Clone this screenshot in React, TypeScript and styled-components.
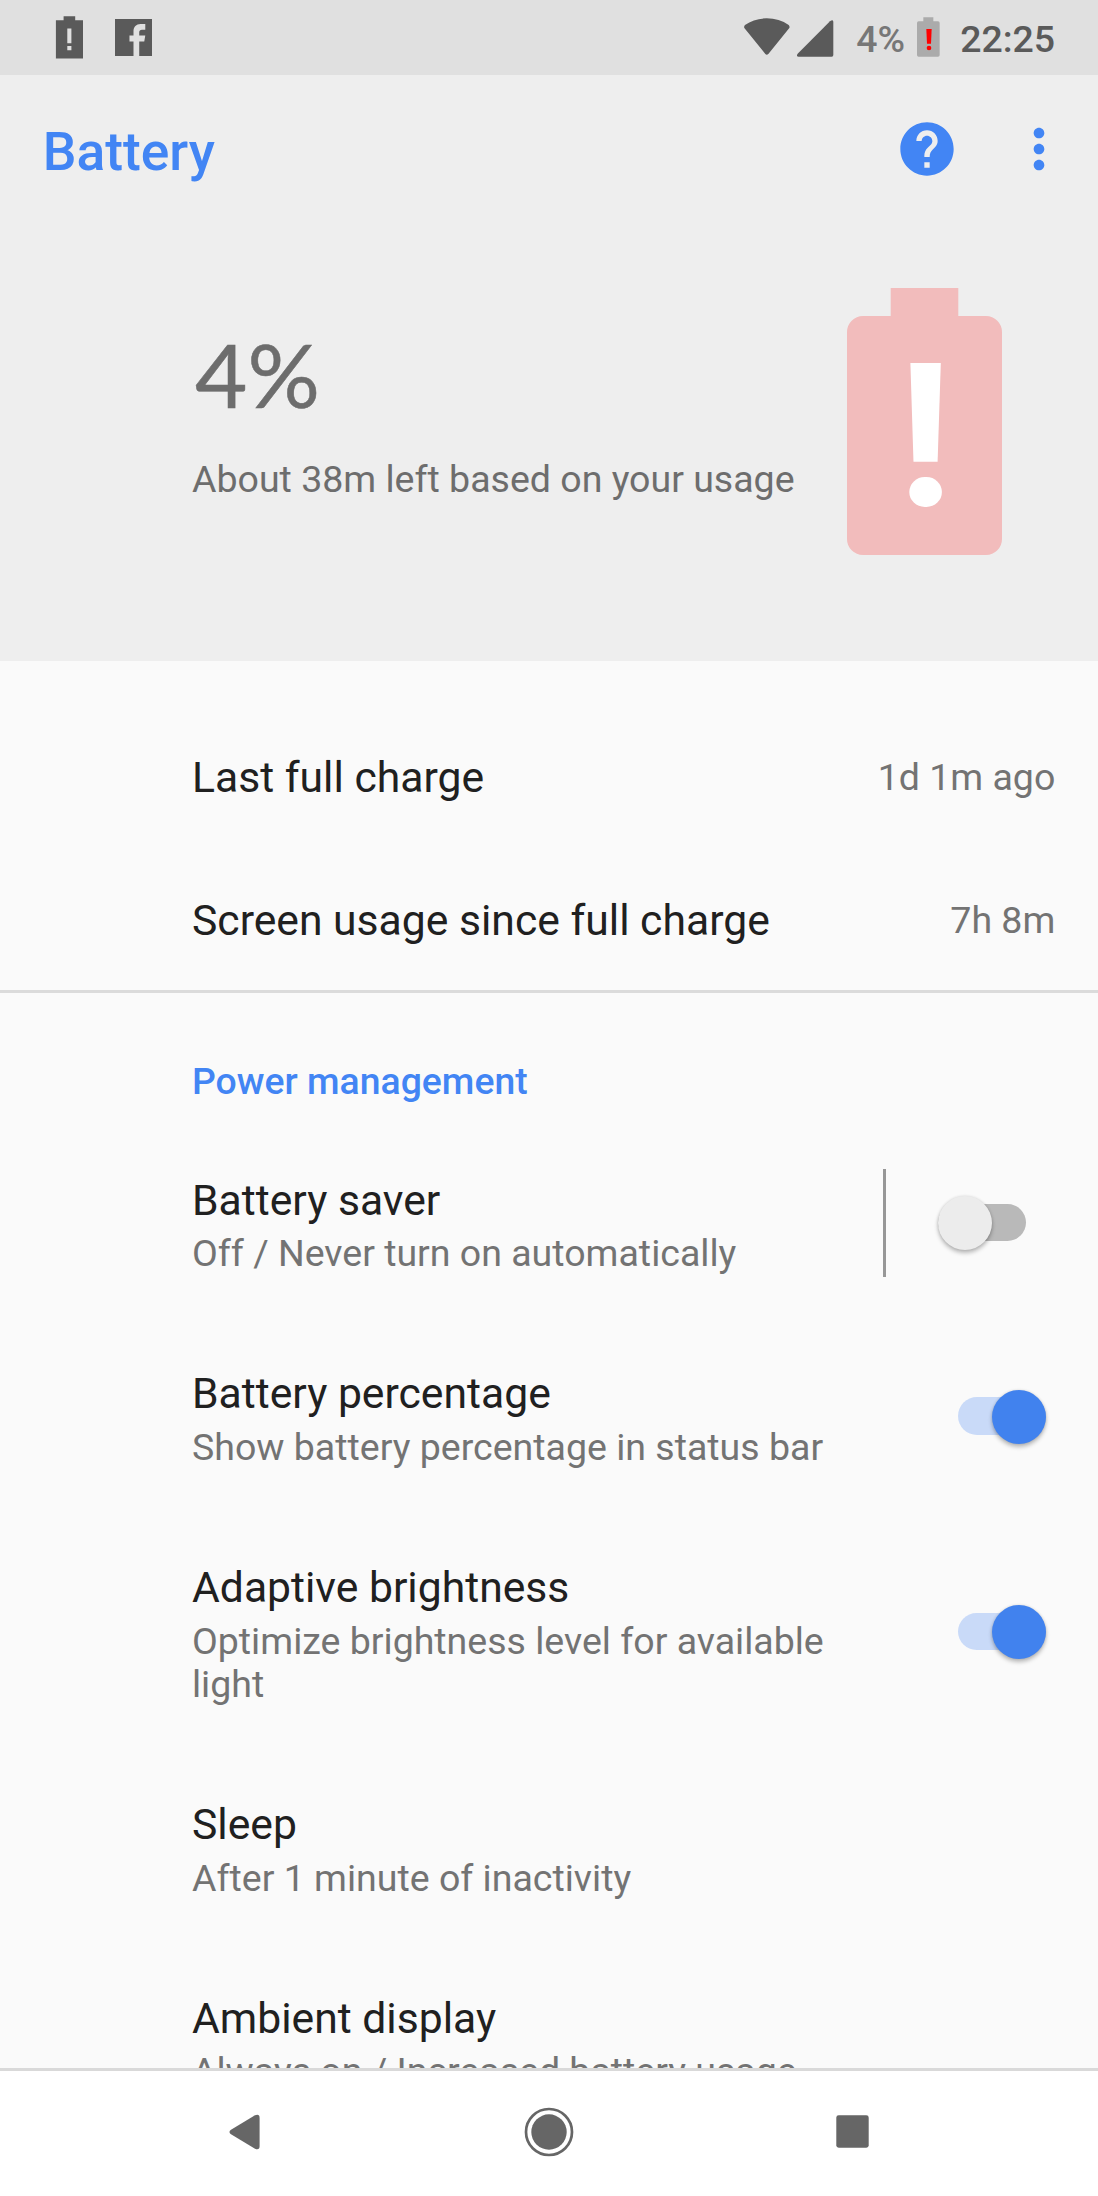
import React from "react";
import styled, { createGlobalStyle } from "styled-components";
import { MdHelp, MdMoreVert } from "react-icons/md";

const ACCENT = "#4285f4";

const GlobalStyle = createGlobalStyle`
  html, body { margin: 0; padding: 0; background: #fafafa; }
  * { box-sizing: border-box; }
  body { font-family: Roboto, "Noto Sans", sans-serif; }
  svg { display: block; flex: none; }
`;

const Screen = styled.div`
  width: 1098px;
  height: 2196px;
  display: flex;
  flex-direction: column;
  overflow: hidden;
  background: #fafafa;
`;

const StatusBar = styled.header`
  flex: none;
  height: 74.6px;
  display: flex;
  justify-content: space-between;
  padding: 16px 43px 0 55px;
  background: #e0e0e0;
`;

const Notifications = styled.div`
  display: flex;
  gap: 31px;
`;

const SystemIcons = styled.div`
  display: flex;
`;

const StatusText = styled.span<{ $muted?: boolean }>`
  height: 44px;
  font-size: 37.4px;
  line-height: 44px;
  font-weight: 500;
  white-space: nowrap;
  color: ${(p) => (p.$muted ? "#777777" : "#5a5a5a")};
  margin: ${(p) => (p.$muted ? "1px 12px 0 21px" : "1px 0 0 20px")};
`;

const Toolbar = styled.div`
  flex: none;
  height: 149.4px;
  display: flex;
  align-items: center;
  padding: 0 26.7px 0 42.7px;
  background: #eeeeee;
`;

const ToolbarTitle = styled.h1`
  margin: 5.6px auto 0 0;
  font-size: 53.4px;
  line-height: 62px;
  font-weight: 500;
  color: ${ACCENT};
`;

const IconButton = styled.button`
  display: block;
  border: 0;
  padding: 0;
  margin-left: 48.3px;
  background: none;
  color: ${ACCENT};
  font-size: 64px;
`;

const Summary = styled.section`
  flex: none;
  height: 437px;
  display: flex;
  justify-content: space-between;
  padding: 64px 96px 0 192px;
  background: #eeeeee;
  color: #6d6d6d;
`;

const Level = styled.div`
  margin: 35px 0 0 3px;
  font-family: Lato, Roboto, sans-serif;
  font-size: 87px;
  line-height: 104px;
  transform: scaleX(1.04);
  transform-origin: left;
  -webkit-text-stroke: 0.5px currentColor;
`;

const Estimate = styled.div`
  margin-top: 30px;
  font-size: 37.5px;
  line-height: 44px;
  white-space: nowrap;
`;

const Usage = styled.section`
  flex: none;
  padding-top: 43px;
  height: 332px;
  border-bottom: 3px solid #dbdbdb;
`;

const UsageRow = styled.div`
  height: 143.3px;
  display: flex;
  align-items: center;
  justify-content: space-between;
  padding: 3px 42.7px 0 192px;
`;

const Preferences = styled.section`
  flex: 1;
  min-height: 0;
  overflow: hidden;
`;

const Category = styled.h2`
  margin: 0;
  height: 133.4px;
  padding: 66.2px 0 0 192px;
  font-size: 37.36px;
  line-height: 44px;
  font-weight: 500;
  color: ${ACCENT};
`;

const Preference = styled.div`
  display: flex;
  align-items: center;
  padding-left: 192px;
`;

const Labels = styled.div`
  width: 664px;
  padding: 48.3px 0 43.8px;
`;

const Title = styled.div`
  font-size: 42.67px;
  line-height: 50px;
  color: #202020;
`;

const Detail = styled.div`
  font-size: 37.5px;
  line-height: 43.8px;
  color: #737373;
`;

const PrefDetail = styled(Detail)`
  margin-top: 7.7px;
`;

const UsageValue = styled(Detail)`
  margin-top: 1.4px;
`;

const Separator = styled.div`
  width: 3px;
  height: 108px;
  margin-left: 27px;
  background: #979797;
`;

const Track = styled.div<{ $on: boolean }>`
  width: 88.5px;
  height: 37.4px;
  margin-left: auto;
  margin-right: ${(p) => (p.$on ? "52px" : "71.7px")};
  margin-bottom: 1.4px;
  border-radius: 19px;
  display: flex;
  align-items: center;
  justify-content: ${(p) => (p.$on ? "flex-end" : "flex-start")};
  background: ${(p) => (p.$on ? "#c9daf8" : "#b9b9b9")};
`;

const Thumb = styled.div<{ $on: boolean }>`
  flex: none;
  width: 54px;
  height: 54px;
  margin-top: 1.6px;
  border-radius: 50%;
  background: ${(p) => (p.$on ? "#4182ee" : "#ececec")};
  box-shadow: 0 3px 4px rgba(0, 0, 0, 0.26), 0 0 3px rgba(0, 0, 0, 0.12);
`;

const NavBar = styled.nav`
  flex: none;
  height: 128px;
  display: grid;
  grid-template-columns: repeat(3, 304px);
  justify-content: center;
  align-items: center;
  justify-items: center;
  padding: 0 1px 4px 0;
  border-top: 3px solid #d9d9d9;
  background: #ffffff;
`;

const BatteryAlertIcon = () => (
  <svg width="29" height="43" viewBox="0 0 29 43" fill="#5a5a5a">
    <path
      fillRule="evenodd"
      d="M8.6 .2H20.2V4.2H28V42.5H.9V4.2H8.6ZM12.3 12.5V27.3H16.4V12.5ZM12.3 30V34.2H16.4V30Z"
    />
  </svg>
);

const FacebookGlyph = styled.svg`
  width: 37px;
  height: 37px;
  margin-top: 3px;
  fill: #5a5a5a;
`;

const FacebookIcon = () => (
  <FacebookGlyph viewBox="0 0 110 110">
    <path d="M0 0H110V110H72V67H87L90 49H72V40C72 35 75 32 80 32H90V15H76C63 15 55 24 55 36V49H43V67H55V110H0Z" />
  </FacebookGlyph>
);

const SignalIcons = () => (
  <svg width="92" height="41" viewBox="130 48 276 123" fill="#5a5a5a">
    <path d="M134 84Q132 79 136 75Q164 55 201 55Q239 55 267 75Q271 79 269 84L206 162Q201 167 197 162Z" />
    <path d="M391 64Q401 56 401 66V165Q401 170 396 170H297Q288 169 294 161Z" />
  </svg>
);

const SmallBatteryIcon = () => (
  <svg width="23" height="41" viewBox="651 48 69 123">
    <path
      fill="#ababab"
      d="M670 52H700V64H714Q719 64 719 69V165Q719 170 714 170H656Q651 170 651 165V69Q651 64 656 64H670Z"
    />
    <path fill="#ff0000" d="M679 87H695L693 131H681Z" />
    <circle cx="687" cy="144" r="7" fill="#ff0000" />
  </svg>
);

const LargeBatteryIcon = () => (
  <svg width="155" height="267" viewBox="0 0 155 267">
    <path
      fill="#f2bcbc"
      d="M43.7 0H111.3V28H139A16 16 0 0 1 155 44V251A16 16 0 0 1 139 267H16A16 16 0 0 1 0 251V44A16 16 0 0 1 16 28H43.7Z"
    />
    <path fill="#ffffff" d="M63.4 75H93.8L90.6 173.7H66.5Z" />
    <rect x="62.3" y="189" width="32.6" height="30" rx="15.5" ry="15" fill="#ffffff" />
  </svg>
);

const Switch = ({ on }: { on: boolean }) => (
  <Track $on={on} role="switch" aria-checked={on}>
    <Thumb $on={on} />
  </Track>
);

type Pref = { title: string; detail: string; on?: boolean; separated?: boolean };

const usage = [
  { label: "Last full charge", value: "1d 1m ago" },
  { label: "Screen usage since full charge", value: "7h 8m" },
];

const preferences: Pref[] = [
  { title: "Battery saver", detail: "Off / Never turn on automatically", on: false, separated: true },
  { title: "Battery percentage", detail: "Show battery percentage in status bar", on: true },
  { title: "Adaptive brightness", detail: "Optimize brightness level for available light", on: true },
  { title: "Sleep", detail: "After 1 minute of inactivity" },
  { title: "Ambient display", detail: "Always on / Increased battery usage" },
];

export default function App() {
  return (
    <Screen>
      <GlobalStyle />
      <StatusBar>
        <Notifications>
          <BatteryAlertIcon />
          <FacebookIcon />
        </Notifications>
        <SystemIcons>
          <SignalIcons />
          <StatusText $muted>4%</StatusText>
          <SmallBatteryIcon />
          <StatusText>22:25</StatusText>
        </SystemIcons>
      </StatusBar>
      <Toolbar>
        <ToolbarTitle>Battery</ToolbarTitle>
        <IconButton aria-label="Help">
          <MdHelp />
        </IconButton>
        <IconButton aria-label="More options">
          <MdMoreVert />
        </IconButton>
      </Toolbar>
      <Summary>
        <div>
          <Level>4%</Level>
          <Estimate>About 38m left based on your usage</Estimate>
        </div>
        <LargeBatteryIcon />
      </Summary>
      <Usage>
        {usage.map((u) => (
          <UsageRow key={u.label}>
            <Title>{u.label}</Title>
            <UsageValue>{u.value}</UsageValue>
          </UsageRow>
        ))}
      </Usage>
      <Preferences>
        <Category>Power management</Category>
        {preferences.map((p) => (
          <Preference key={p.title}>
            <Labels>
              <Title>{p.title}</Title>
              <PrefDetail>{p.detail}</PrefDetail>
            </Labels>
            {p.separated && <Separator />}
            {p.on !== undefined && <Switch on={p.on} />}
          </Preference>
        ))}
      </Preferences>
      <NavBar>
        <svg width="31" height="36" viewBox="0 0 31 36" fill="#666666">
          <path d="M1.6 16L26 1.2Q30.6 -.6 30.6 4V32Q30.6 36.6 26 34.8L1.6 20Q-.6 18 1.6 16Z" />
        </svg>
        <svg width="50" height="50" viewBox="0 0 50 50">
          <circle cx="25" cy="25" r="23" fill="none" stroke="#666666" strokeWidth="2.7" />
          <circle cx="25" cy="25" r="17.7" fill="#666666" />
        </svg>
        <svg width="33" height="33" viewBox="0 0 33 33">
          <rect x=".3" y=".3" width="32.4" height="32.4" rx="2.4" fill="#666666" />
        </svg>
      </NavBar>
    </Screen>
  );
}
